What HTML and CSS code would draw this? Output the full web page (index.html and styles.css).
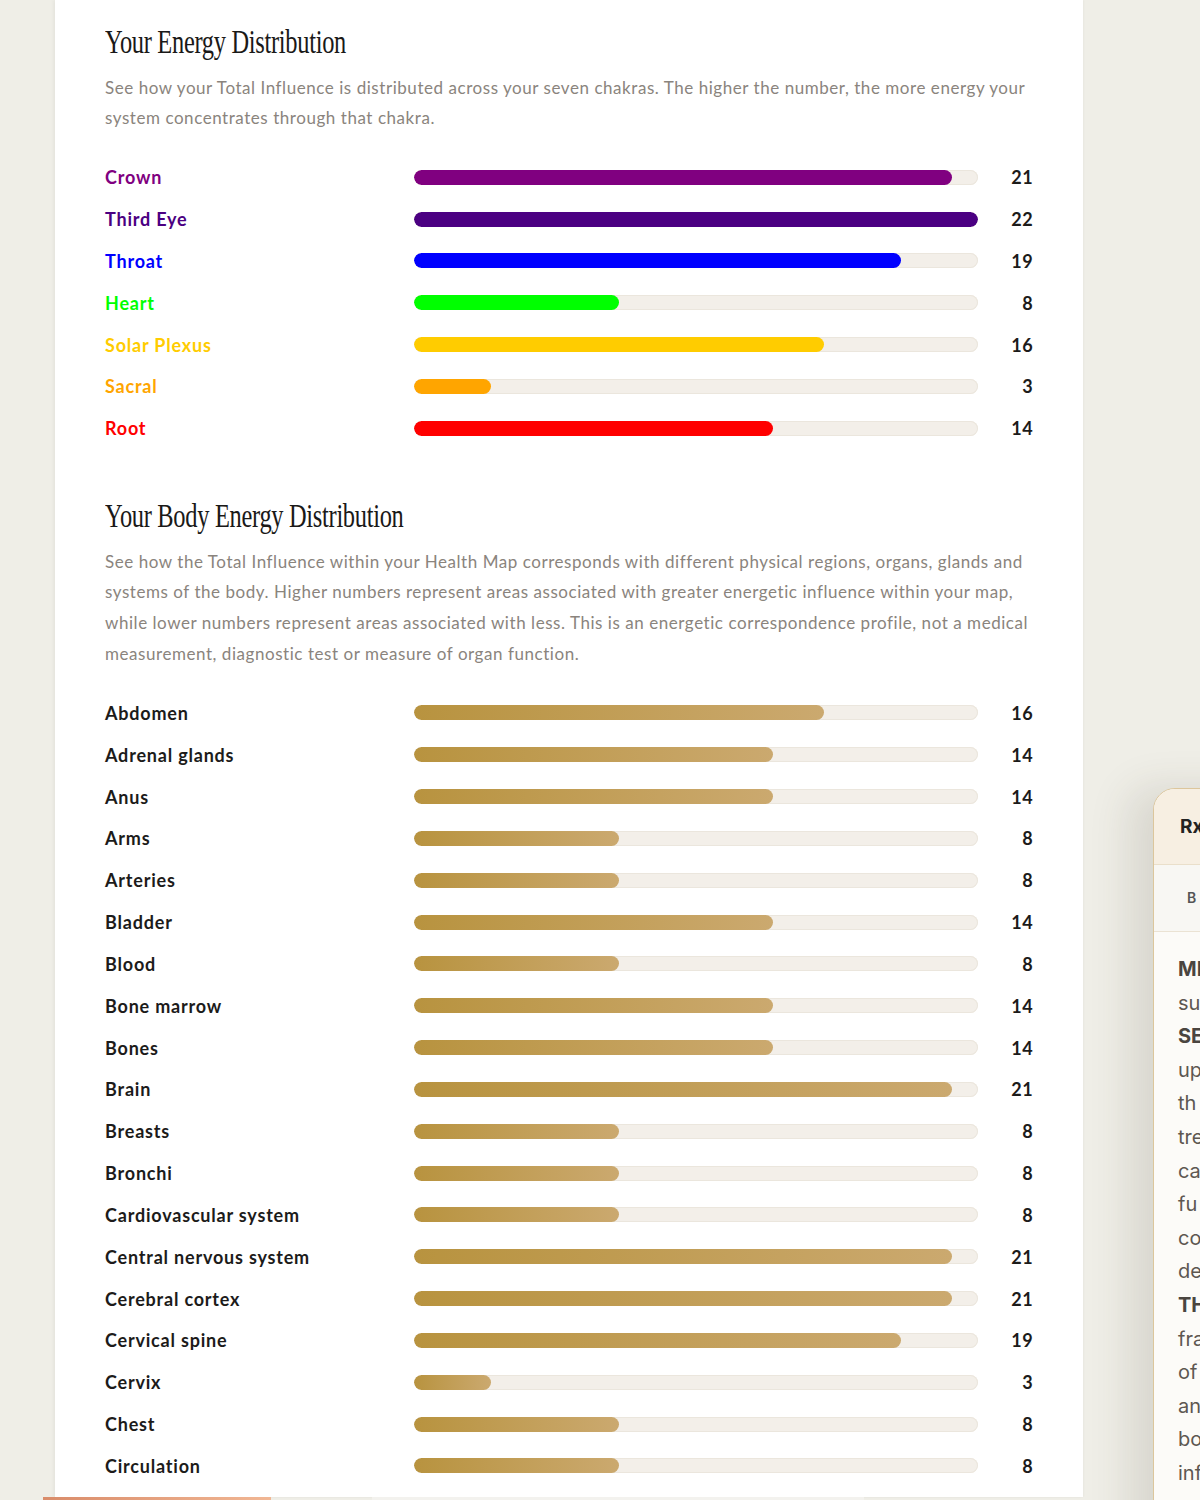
FILE: index.html
```html
<!DOCTYPE html>
<html lang="en">
<head>
<meta charset="UTF-8">
<meta name="viewport" content="width=device-width, initial-scale=1.0">
<title>Your Energy Distribution</title>
<link rel="stylesheet" href="styles.css">
</head>
<body>
<div class="page">
  <div class="card">
    <section class="dist">
      <h2 class="dist-title"><span>Your Energy Distribution</span></h2>
      <p class="dist-text">See how your Total Influence is distributed across your seven chakras. The higher the number, the more energy your system concentrates through that chakra.</p>
      <ul class="bars">
        <li class="bar-row"><span class="bar-label crown">Crown</span><span class="track"><span class="fill fill-crown" style="width:95.45%"></span></span><span class="bar-value">21</span></li>
        <li class="bar-row"><span class="bar-label third-eye">Third Eye</span><span class="track"><span class="fill fill-third-eye" style="width:100%"></span></span><span class="bar-value">22</span></li>
        <li class="bar-row"><span class="bar-label throat">Throat</span><span class="track"><span class="fill fill-throat" style="width:86.36%"></span></span><span class="bar-value">19</span></li>
        <li class="bar-row"><span class="bar-label heart">Heart</span><span class="track"><span class="fill fill-heart" style="width:36.36%"></span></span><span class="bar-value">8</span></li>
        <li class="bar-row"><span class="bar-label solar">Solar Plexus</span><span class="track"><span class="fill fill-solar" style="width:72.73%"></span></span><span class="bar-value">16</span></li>
        <li class="bar-row"><span class="bar-label sacral">Sacral</span><span class="track"><span class="fill fill-sacral" style="width:13.64%"></span></span><span class="bar-value">3</span></li>
        <li class="bar-row"><span class="bar-label root">Root</span><span class="track"><span class="fill fill-root" style="width:63.64%"></span></span><span class="bar-value">14</span></li>
      </ul>
    </section>

    <section class="dist dist-body">
      <h2 class="dist-title"><span>Your Body Energy Distribution</span></h2>
      <p class="dist-text">See how the Total Influence within your Health Map corresponds with different physical regions, organs, glands and systems of the body. Higher numbers represent areas associated with greater energetic influence within your map, while lower numbers represent areas associated with less. This is an energetic correspondence profile, not a medical measurement, diagnostic test or measure of organ function.</p>
      <ul class="bars">
        <li class="bar-row"><span class="bar-label">Abdomen</span><span class="track"><span class="fill fill-gold" style="width:72.73%"></span></span><span class="bar-value">16</span></li>
        <li class="bar-row"><span class="bar-label">Adrenal glands</span><span class="track"><span class="fill fill-gold" style="width:63.64%"></span></span><span class="bar-value">14</span></li>
        <li class="bar-row"><span class="bar-label">Anus</span><span class="track"><span class="fill fill-gold" style="width:63.64%"></span></span><span class="bar-value">14</span></li>
        <li class="bar-row"><span class="bar-label">Arms</span><span class="track"><span class="fill fill-gold" style="width:36.36%"></span></span><span class="bar-value">8</span></li>
        <li class="bar-row"><span class="bar-label">Arteries</span><span class="track"><span class="fill fill-gold" style="width:36.36%"></span></span><span class="bar-value">8</span></li>
        <li class="bar-row"><span class="bar-label">Bladder</span><span class="track"><span class="fill fill-gold" style="width:63.64%"></span></span><span class="bar-value">14</span></li>
        <li class="bar-row"><span class="bar-label">Blood</span><span class="track"><span class="fill fill-gold" style="width:36.36%"></span></span><span class="bar-value">8</span></li>
        <li class="bar-row"><span class="bar-label">Bone marrow</span><span class="track"><span class="fill fill-gold" style="width:63.64%"></span></span><span class="bar-value">14</span></li>
        <li class="bar-row"><span class="bar-label">Bones</span><span class="track"><span class="fill fill-gold" style="width:63.64%"></span></span><span class="bar-value">14</span></li>
        <li class="bar-row"><span class="bar-label">Brain</span><span class="track"><span class="fill fill-gold" style="width:95.45%"></span></span><span class="bar-value">21</span></li>
        <li class="bar-row"><span class="bar-label">Breasts</span><span class="track"><span class="fill fill-gold" style="width:36.36%"></span></span><span class="bar-value">8</span></li>
        <li class="bar-row"><span class="bar-label">Bronchi</span><span class="track"><span class="fill fill-gold" style="width:36.36%"></span></span><span class="bar-value">8</span></li>
        <li class="bar-row"><span class="bar-label">Cardiovascular system</span><span class="track"><span class="fill fill-gold" style="width:36.36%"></span></span><span class="bar-value">8</span></li>
        <li class="bar-row"><span class="bar-label">Central nervous system</span><span class="track"><span class="fill fill-gold" style="width:95.45%"></span></span><span class="bar-value">21</span></li>
        <li class="bar-row"><span class="bar-label">Cerebral cortex</span><span class="track"><span class="fill fill-gold" style="width:95.45%"></span></span><span class="bar-value">21</span></li>
        <li class="bar-row"><span class="bar-label">Cervical spine</span><span class="track"><span class="fill fill-gold" style="width:86.36%"></span></span><span class="bar-value">19</span></li>
        <li class="bar-row"><span class="bar-label">Cervix</span><span class="track"><span class="fill fill-gold" style="width:13.64%"></span></span><span class="bar-value">3</span></li>
        <li class="bar-row"><span class="bar-label">Chest</span><span class="track"><span class="fill fill-gold" style="width:36.36%"></span></span><span class="bar-value">8</span></li>
        <li class="bar-row"><span class="bar-label">Circulation</span><span class="track"><span class="fill fill-gold" style="width:36.36%"></span></span><span class="bar-value">8</span></li>
      </ul>
    </section>
  </div>

  <div class="strip">
    <span class="strip-warm"></span>
    <span class="strip-light"></span>
  </div>
</div>

<!-- floating side panel, cut off by the window edge -->
<aside class="rx-panel">
  <div class="rx-head">Rx</div>
  <div class="rx-tabs">B</div>
  <div class="rx-body">
    <div class="rx-line strong">MI</div>
    <div class="rx-line">su</div>
    <div class="rx-line strong">SE</div>
    <div class="rx-line">up</div>
    <div class="rx-line">th</div>
    <div class="rx-line">tre</div>
    <div class="rx-line">ca</div>
    <div class="rx-line">fu</div>
    <div class="rx-line">co</div>
    <div class="rx-line">de</div>
    <div class="rx-line strong">TH</div>
    <div class="rx-line">fra</div>
    <div class="rx-line">of</div>
    <div class="rx-line">an</div>
    <div class="rx-line">bo</div>
    <div class="rx-line">inf</div>
  </div>
</aside>
</body>
</html>
```

FILE: styles.css
```css
html,
body {
  margin: 0;
  height: 1500px;
  overflow: hidden;
}

body {
  background: #efeee7;
  font-family: "Lato", "Liberation Sans", sans-serif;
  color: #1c1b1a;
}

.page {
  padding-left: 55px;
  width: 1028px;
}

.card {
  background: #fff;
  height: 1497px;
  padding: 22px 50px 0 50px;
  box-sizing: border-box;
  box-shadow: -2px 0 3px rgba(0, 0, 0, 0.04), 1px 0 2px rgba(0, 0, 0, 0.03);
}

/* Section headings + intro text */
.dist-title {
  margin: 0;
  height: 40px;
  font-family: "Liberation Serif", "DejaVu Serif", serif;
  font-weight: normal;
  font-size: 33px;
  line-height: 40px;
  color: #1a1918;
  white-space: nowrap;
}

.dist-title span {
  display: inline-block;
  transform: scaleX(0.74);
  transform-origin: left center;
  letter-spacing: -0.4px;
}

.dist-text {
  margin: 10.5px 0 0 0;
  font-size: 17px;
  line-height: 30.7px;
  letter-spacing: 0.55px;
  color: #8a847d;
}

.dist-body {
  margin-top: 47px;
}

/* Bar list */
.bars {
  list-style: none;
  margin: 22.5px 0 0 0;
  padding: 0;
}

.bar-row {
  display: grid;
  grid-template-columns: 309px 564px 55px;
  align-items: center;
  height: 41.83px;
}

.bar-label {
  font-size: 18px;
  font-weight: bold;
  letter-spacing: 0.8px;
  color: #1c1b1a;
  white-space: nowrap;
}

.bar-value {
  text-align: right;
  font-size: 18px;
  font-weight: bold;
  letter-spacing: 0.4px;
  color: #1c1b1a;
}

.track {
  display: block;
  height: 15px;
  border-radius: 8px;
  background: #f3efe9;
  box-shadow: inset 0 0 0 1px #ebe6dd;
  overflow: hidden;
}

.fill {
  display: block;
  height: 100%;
  border-radius: 8px;
}

.crown { color: #800080; }
.third-eye { color: #4b0082; }
.throat { color: #0000ff; }
.heart { color: #00ff00; }
.solar { color: #ffcc00; }
.sacral { color: #ffa500; }
.root { color: #ff0000; }

.fill-crown { background: #800080; }
.fill-third-eye { background: #4b0082; }
.fill-throat { background: #0000ff; }
.fill-heart { background: #00ff00; }
.fill-solar { background: #ffcc00; }
.fill-sacral { background: #ffa500; }
.fill-root { background: #ff0000; }

.fill-gold {
  background: linear-gradient(90deg, #b8933f, #cba96f);
}

/* bottom edge of the next block */
.strip {
  display: flex;
  height: 3px;
  margin-left: -12px;
}

.strip-warm {
  width: 228px;
  background: linear-gradient(90deg, #d98c6a, #f1b794);
}

.strip-light {
  margin-left: 101px;
  width: 492px;
  background: #f3f2ee;
}

/* Side panel */
.rx-panel {
  position: absolute;
  left: 1153px;
  top: 788px;
  width: 420px;
  height: 760px;
  border: 1.5px solid #dcc69c;
  border-radius: 22px 0 0 0;
  background: #fcfbf8;
  box-shadow: -24px 0 40px rgba(70, 65, 45, 0.13);
  overflow: hidden;
}

.rx-head {
  height: 75px;
  padding-left: 26px;
  background: #f7efe2;
  border-bottom: 1px solid #eadfca;
  font-family: "Inter", "Liberation Sans", sans-serif;
  font-weight: bold;
  font-size: 19px;
  line-height: 75px;
  color: #222;
}

.rx-tabs {
  height: 66px;
  padding-left: 33px;
  background: #f8f7f3;
  border-bottom: 1px solid #ebe3d4;
  font-family: "Inter", "Liberation Sans", sans-serif;
  font-weight: 600;
  font-size: 14px;
  line-height: 66px;
  color: #555;
}

.rx-body {
  padding: 21px 0 0 24px;
  font-family: "Inter", "Liberation Sans", sans-serif;
  font-size: 20px;
  line-height: 33.6px;
  color: #5d5751;
}

.rx-line.strong {
  font-weight: bold;
  color: #4a4540;
}
```
